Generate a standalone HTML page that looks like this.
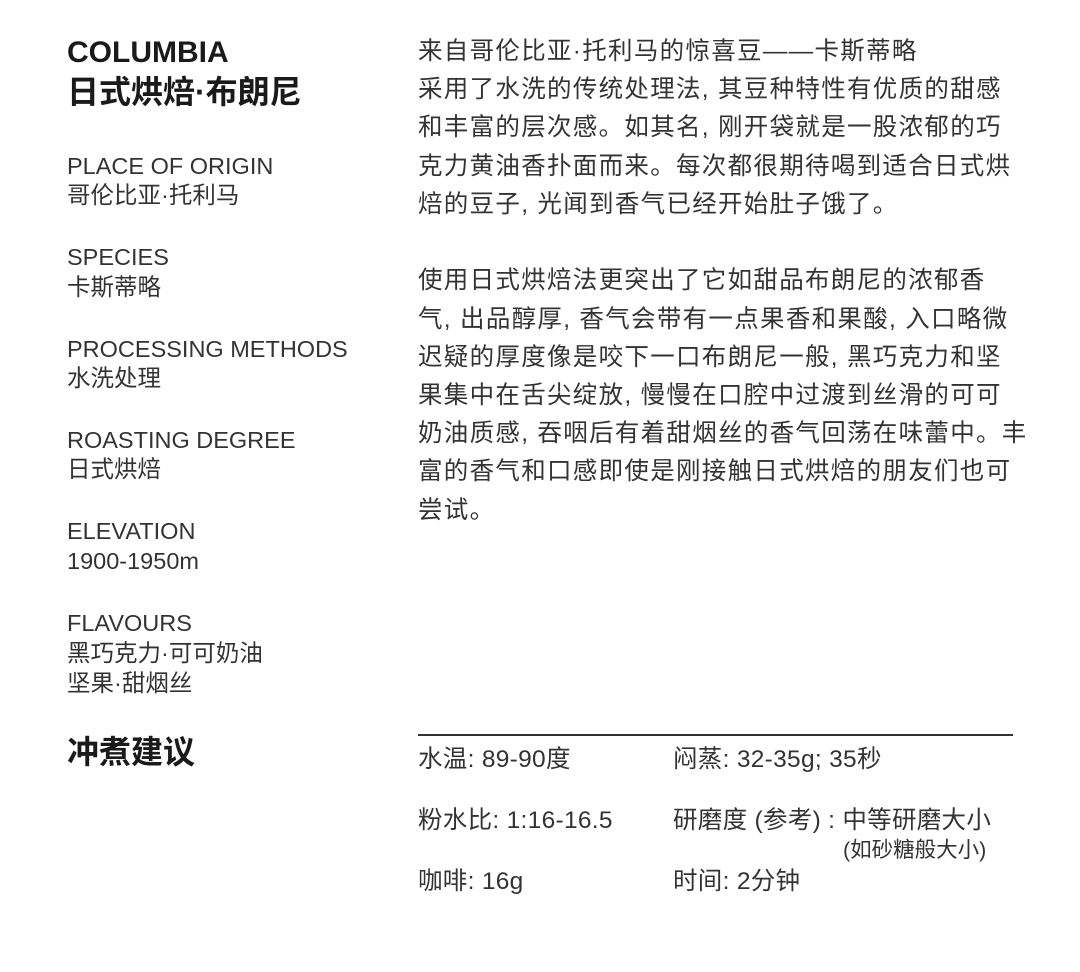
<!DOCTYPE html>
<html><head><meta charset="utf-8"><style>
body{margin:0;width:1080px;height:972px;background:#fff;color:#222;font-family:"Liberation Sans","Noto Sans CJK SC",sans-serif;position:relative;overflow:hidden}
.t{position:absolute;white-space:nowrap;line-height:1}
.h{font-size:32px;font-weight:bold;color:#1a1a1a}
.l{font-size:23.5px;color:#333}
.b{font-size:24.5px;color:#333;letter-spacing:1.3px}
.c{font-size:24.5px;color:#333;letter-spacing:0.3px}
</style></head><body>
<div class="t h" style="left:67px;top:38px;font-size:30px">COLUMBIA</div>
<div class="t h" style="left:67px;top:76px">日式烘焙·布朗尼</div>

<div class="t l" style="left:67px;top:155px">PLACE OF ORIGIN</div>
<div class="t l" style="left:67px;top:184px">哥伦比亚·托利马</div>
<div class="t l" style="left:67px;top:246px">SPECIES</div>
<div class="t l" style="left:67px;top:276px">卡斯蒂略</div>
<div class="t l" style="left:67px;top:338px">PROCESSING METHODS</div>
<div class="t l" style="left:67px;top:367px">水洗处理</div>
<div class="t l" style="left:67px;top:429px">ROASTING DEGREE</div>
<div class="t l" style="left:67px;top:458px">日式烘焙</div>
<div class="t l" style="left:67px;top:520px">ELEVATION</div>
<div class="t l" style="left:67px;top:550px">1900-1950m</div>
<div class="t l" style="left:67px;top:612px">FLAVOURS</div>
<div class="t l" style="left:67px;top:642px">黑巧克力·可可奶油</div>
<div class="t l" style="left:67px;top:672px">坚果·甜烟丝</div>

<div class="t h" style="left:67px;top:736px">冲煮建议</div>

<div class="t b" style="left:418px;top:40px">来自哥伦比亚·托利马的惊喜豆——卡斯蒂略</div>
<div class="t b" style="left:418px;top:78px">采用了水洗的传统处理法, 其豆种特性有优质的甜感</div>
<div class="t b" style="left:418px;top:116px">和丰富的层次感。如其名, 刚开袋就是一股浓郁的巧</div>
<div class="t b" style="left:418px;top:155px">克力黄油香扑面而来。每次都很期待喝到适合日式烘</div>
<div class="t b" style="left:418px;top:193px">焙的豆子, 光闻到香气已经开始肚子饿了。</div>

<div class="t b" style="left:418px;top:269px">使用日式烘焙法更突出了它如甜品布朗尼的浓郁香</div>
<div class="t b" style="left:418px;top:308px">气, 出品醇厚, 香气会带有一点果香和果酸, 入口略微</div>
<div class="t b" style="left:418px;top:346px">迟疑的厚度像是咬下一口布朗尼一般, 黑巧克力和坚</div>
<div class="t b" style="left:418px;top:384px">果集中在舌尖绽放, 慢慢在口腔中过渡到丝滑的可可</div>
<div class="t b" style="left:418px;top:422px">奶油质感, 吞咽后有着甜烟丝的香气回荡在味蕾中。丰</div>
<div class="t b" style="left:418px;top:460px">富的香气和口感即使是刚接触日式烘焙的朋友们也可</div>
<div class="t b" style="left:418px;top:499px">尝试。</div>

<div style="position:absolute;left:418px;top:734px;width:595px;height:2px;background:#333"></div>
<div class="t c" style="left:418px;top:748px">水温: 89-90度</div>
<div class="t c" style="left:673px;top:748px">闷蒸: 32-35g; 35秒</div>
<div class="t c" style="left:418px;top:809px">粉水比: 1:16-16.5</div>
<div class="t c" style="left:673px;top:809px">研磨度 (参考) : 中等研磨大小</div>
<div class="t" style="left:843px;top:840px;font-size:21.5px;color:#333">(如砂糖般大小)</div>
<div class="t c" style="left:418px;top:870px">咖啡: 16g</div>
<div class="t c" style="left:673px;top:870px">时间: 2分钟</div>
</body></html>
